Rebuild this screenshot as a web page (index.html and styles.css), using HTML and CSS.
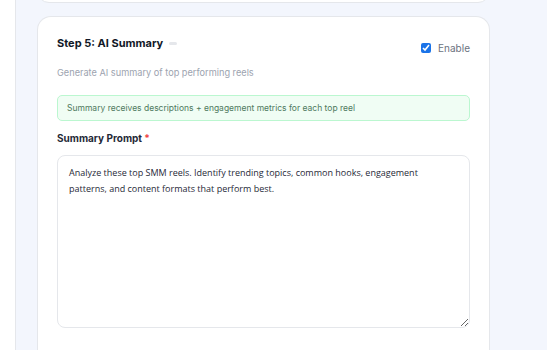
FILE: index.html
```html
<!DOCTYPE html>
<html>
<head>
<meta charset="utf-8">
<link rel="stylesheet" href="styles.css">
</head>
<body>
<div class="page">
  <aside class="sidebar"></aside>
  <main class="main">
    <div class="prev-card"></div>
    <section class="card">
      <div class="head">
        <div class="head-left">
          <h2 class="title">Step 5: AI Summary <span class="pill"></span></h2>
          <p class="desc">Generate AI summary of top performing reels</p>
        </div>
        <label class="enable"><input type="checkbox" checked> Enable</label>
      </div>
      <div class="note">Summary receives descriptions + engagement metrics for each top reel</div>
      <div class="label">Summary Prompt <span class="req">*</span></div>
      <textarea class="prompt">Analyze these top SMM reels. Identify trending topics, common hooks, engagement patterns, and content formats that perform best.</textarea>
    </section>
  </main>
</div>
</body>
</html>
```

FILE: styles.css
```css
* { box-sizing: border-box; }
html, body { margin: 0; padding: 0; }
body {
  width: 547px;
  height: 350px;
  overflow: hidden;
  font-family: Inter, "Noto Sans", sans-serif;
  background: #f3f6fd;
}
.page {
  display: flex;
  height: 350px;
  overflow: hidden;
}
.sidebar {
  width: 16px;
  flex: none;
  background: #ffffff;
  border-right: 1px solid #e5e7eb;
}
.main {
  flex: 1;
  padding-left: 21px;
  padding-right: 57px;
  overflow: hidden;
}
.prev-card {
  height: 20px;
  margin-top: -17px;
  background: #fff;
  border: 1px solid #e5e7eb;
  border-radius: 0 0 12px 12px;
}
.card {
  margin-top: 13px;
  background: #fff;
  border: 1px solid #e5e7eb;
  border-bottom: none;
  border-radius: 14px 14px 0 0;
  padding: 18px 19px 0 19px;
  height: 340px;
}
.head {
  display: flex;
  justify-content: space-between;
  align-items: flex-start;
}
.title {
  margin: 0;
  font-size: 11px;
  line-height: 16px;
  font-weight: 700;
  color: #111827;
  display: flex;
  align-items: center;
}
.pill {
  display: inline-block;
  width: 8px;
  height: 3px;
  border-radius: 2px;
  background: #e5e7eb;
  margin-left: 6px;
}
.desc {
  margin: 15px 0 0;
  font-size: 9.2px;
  line-height: 14px;
  color: #9ca3af;
}
.enable {
  margin-top: 6px;
  display: flex;
  align-items: center;
  font-size: 10px;
  line-height: 14px;
  color: #6b7280;
}
.enable input {
  margin: 0 7px 0 0;
  width: 10px;
  height: 10px;
  accent-color: #1a73e8;
}
.note {
  margin-top: 15px;
  background: #f0fdf4;
  border: 1px solid #bbf7d0;
  border-radius: 5px;
  padding: 6px 9px;
  font-size: 8.5px;
  line-height: 12px;
  color: #4f7a60;
}
.label {
  margin-top: 10px;
  font-size: 10px;
  line-height: 14px;
  font-weight: 700;
  color: #1f2937;
}
.req { color: #ef4444; }
.prompt {
  display: block;
  margin-top: 10px;
  width: 100%;
  height: 173px;
  border: 1px solid #e5e7eb;
  border-radius: 8px;
  padding: 9px 40px 9px 11px;
  font-family: "Open Sans", "Noto Sans", sans-serif;
  font-size: 9px;
  line-height: 16px;
  color: #1f2937;
  background: #fff;
  outline: none;
  resize: vertical;
}
```
